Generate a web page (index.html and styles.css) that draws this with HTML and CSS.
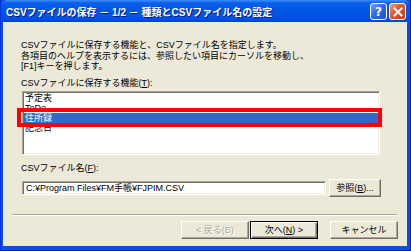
FILE: index.html
```html
<!DOCTYPE html>
<html lang="ja">
<head>
<meta charset="UTF-8">
<meta name="viewport" content="width=device-width, initial-scale=1.0">
<title>CSVファイルの保存</title>
<link rel="stylesheet" href="styles.css">
</head>
<body>

<div class="window">
    <div class="titlebar">
        <span class="title">CSVファイルの保存 － 1/2 － 種類とCSVファイル名の設定</span>
        <div class="caption-btns">
            <span class="cap help">?</span>
            <span class="cap close">
                <svg width="10" height="10" viewBox="0 0 10 10"><path d="M1.5 1.5 L8.5 8.5 M8.5 1.5 L1.5 8.5" stroke="#fff" stroke-width="2" stroke-linecap="square"/></svg>
            </span>
        </div>
    </div>

    <div class="client">
        <p class="intro">
            CSVファイルに保存する機能と、CSVファイル名を指定します。<br>
            各項目のヘルプを表示するには、参照したい項目にカーソルを移動し、<br>
            [F1]キーを押します。
        </p>

        <label class="field-label">CSVファイルに保存する機能(<u>T</u>):</label>
        <div class="list-wrap">
            <ul class="listbox">
                <li>予定表</li>
                <li>ToDo</li>
                <li class="selected">住所録</li>
                <li>記念日</li>
            </ul>
            <div class="mark"></div>
        </div>

        <label class="field-label second">CSVファイル名(<u>F</u>):</label>
        <div class="file-row">
            <div class="textbox">C:¥Program Files¥FM手帳¥FJPIM.CSV</div>
            <button class="btn browse">参照(<u>B</u>)...</button>
        </div>

        <div class="sep"></div>

        <div class="nav">
            <button class="btn" disabled>&lt; 戻る(B)</button>
            <button class="btn default">次へ(<u>N</u>) &gt;</button>
            <button class="btn cancel">キャンセル</button>
        </div>
    </div>
</div>

</body>
</html>
```

FILE: styles.css
```css
body {
    margin: 0;
    font-family: "Liberation Sans", "Noto Sans CJK JP", sans-serif;
    font-size: 9px;
    color: #000;
}
.window {
    width: 411px;
    height: 251px;
    box-sizing: border-box;
    background: #0A50DC;
    border-left: 1px solid #0831D9;
    border-right: 1px solid #001EA0;
    border-bottom: 1px solid #001EA0;
    display: flex;
    flex-direction: column;
}
.titlebar {
    height: 22px;
    flex: none;
    display: flex;
    align-items: center;
    padding: 0 4px 0 5px;
    background: linear-gradient(#3D8DF8 0, #0A5FEA 3px, #0058E6 40%, #0054E0 80%, #0046C8 100%);
    border-radius: 6px 6px 0 0;
}
.title {
    flex: 1;
    color: #fff;
    font-weight: bold;
    font-size: 10px;
    text-shadow: 1px 1px 0 #0A1883;
    white-space: nowrap;
}
.caption-btns {
    display: flex;
    gap: 2px;
    margin-top: 1px;
}
.cap {
    width: 15px;
    height: 15px;
    border: 1px solid #fff;
    border-radius: 3px;
    display: flex;
    align-items: center;
    justify-content: center;
    color: #fff;
    font-weight: bold;
    font-size: 12px;
    font-family: "DejaVu Sans", sans-serif;
}
.help {
    background: linear-gradient(135deg, #6FA0F8 0, #2F6CE8 45%, #1C50D0 100%);
}
.close {
    background: linear-gradient(135deg, #F09C7C 0, #E2532E 45%, #C83A14 100%);
}
.client {
    flex: 1;
    margin: 0 3px 4px 2px;
    background: #ECE9D8;
    padding-top: 18px;
}
.intro {
    margin: 0 0 0 18px;
    line-height: 10.5px;
}
.field-label {
    display: block;
    margin: 6px 0 3px 18px;
    line-height: 10.5px;
}
.field-label.second {
    margin-top: 8px;
    margin-bottom: 5px;
}
.list-wrap {
    position: relative;
    margin-left: 19px;
    width: 358px;
}
.listbox {
    list-style: none;
    margin: 0;
    padding: 0;
    height: 64px;
    box-sizing: border-box;
    background: #fff;
    border: 1px solid;
    border-color: #ACA899 #fff #fff #ACA899;
    box-shadow: inset 1px 1px 0 #716F64, inset -1px -1px 0 #F1EFE2;
    padding: 1px;
    overflow: hidden;
}
.listbox li {
    height: 10px;
    line-height: 10px;
    padding-left: 1px;
    white-space: nowrap;
}
.listbox li.selected {
    background: #316AC5;
    color: #fff;
}
.mark {
    position: absolute;
    left: -5px;
    top: 17px;
    width: 357px;
    height: 11px;
    border: 4px solid #FF0000;
}
.file-row {
    display: flex;
    align-items: center;
    margin-left: 19px;
    gap: 3px;
}
.textbox {
    width: 304px;
    height: 14px;
    box-sizing: border-box;
    background: #fff;
    border: 1px solid;
    border-color: #ACA899 #fff #fff #ACA899;
    box-shadow: inset 1px 1px 0 #716F64, inset -1px -1px 0 #F1EFE2;
    padding: 0 3px;
    line-height: 12px;
    white-space: nowrap;
}
.btn {
    font: inherit;
    width: 68px;
    height: 18px;
    padding: 0;
    background: #ECE9D8;
    color: #000;
    border: 1px solid;
    border-color: #fff #716F64 #716F64 #fff;
    box-shadow: inset -1px -1px 0 #ACA899;
}
.btn.browse {
    width: 52px;
}
.btn:disabled {
    color: #ACA899;
    text-shadow: 1px 1px 0 #fff;
}
.btn.default {
    border-color: #000;
    box-shadow: inset 1px 1px 0 #fff, inset -1px -1px 0 #716F64, inset -2px -2px 0 #ACA899;
}
.sep {
    margin: 17px 10px 0 9px;
    border-top: 1px solid #ACA899;
    border-bottom: 1px solid #fff;
}
.nav {
    display: flex;
    justify-content: flex-end;
    gap: 1px;
    margin: 5px 9px 0 0;
}
.btn.cancel {
    margin-left: 11px;
}
```
